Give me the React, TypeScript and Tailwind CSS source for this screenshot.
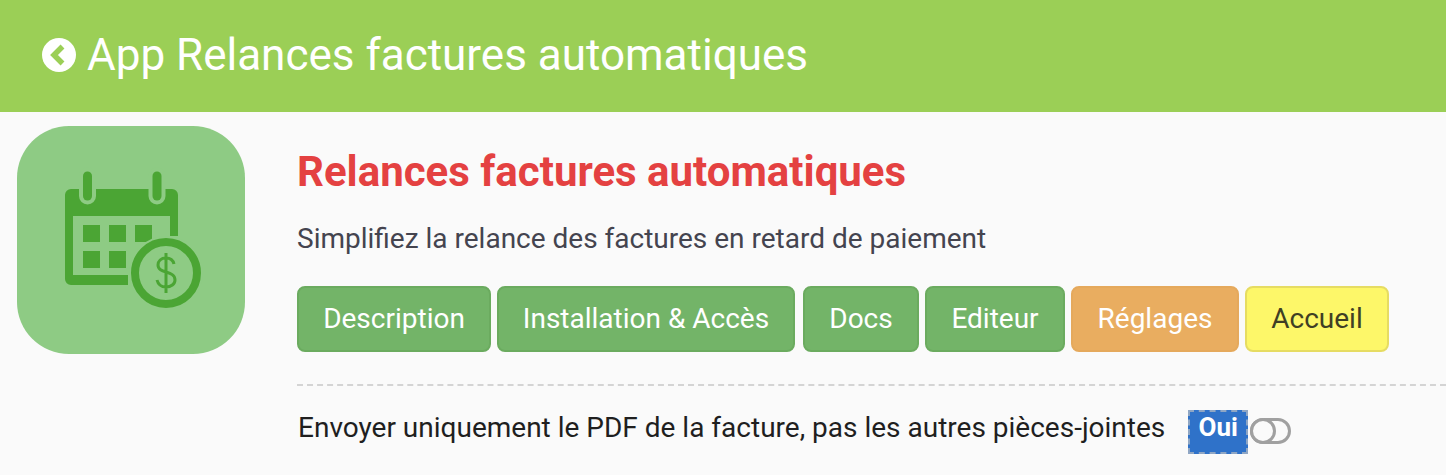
import { ReactNode } from "react";

function NavButton({ className, children }: { className: string; children: ReactNode }) {
  return (
    <a className={`flex h-[66px] items-center justify-center rounded-[8px] border-2 text-[28px] ${className}`}>
      {children}
    </a>
  );
}

function BackIcon() {
  return (
    <svg viewBox="0 0 34 34" className="h-[34px] w-[34px] shrink-0">
      <circle cx="17" cy="17" r="17" fill="#fff" />
      <path d="M20.5 8.5 12 17l8.5 8.5" fill="none" stroke="#9BCF56" strokeWidth="5.5" />
    </svg>
  );
}

function AppIcon() {
  return (
    <div className="h-[228px] w-[228px] shrink-0 rounded-[52px] bg-[#8ECB84]">
      <svg viewBox="0 0 228 228" className="h-[228px] w-[228px]">
        <path
          d="M54 63a6 6 0 0 0-6 6v84a6 6 0 0 0 6 6h57v-10H56V90h97v20h8V69a6 6 0 0 0-6-6z"
          fill="#4BA534"
        />
        <line x1="70.5" y1="50" x2="70.5" y2="70" stroke="#8ECB84" strokeWidth="17" strokeLinecap="round" />
        <line x1="140" y1="50" x2="140" y2="70" stroke="#8ECB84" strokeWidth="17" strokeLinecap="round" />
        <line x1="70.5" y1="50" x2="70.5" y2="70" stroke="#4BA534" strokeWidth="9" strokeLinecap="round" />
        <line x1="140" y1="50" x2="140" y2="70" stroke="#4BA534" strokeWidth="9" strokeLinecap="round" />
        <rect x="66" y="99" width="17" height="17" fill="#4BA534" />
        <rect x="92" y="99" width="17" height="17" fill="#4BA534" />
        <rect x="118" y="99" width="17" height="17" fill="#4BA534" />
        <rect x="66" y="125" width="17" height="17" fill="#4BA534" />
        <rect x="92" y="125" width="17" height="17" fill="#4BA534" />
        <circle cx="149" cy="147" r="37" fill="#8ECB84" />
        <circle cx="149" cy="147" r="31" fill="#8ECB84" stroke="#4BA534" strokeWidth="8" />
        <path
          d="M157 138c-1-4-4-6-8-6-5 0-8 3-8 7 0 9 17 5 17 15 0 4-4 7-9 7-5 0-8-3-9-7M149 127v40"
          fill="none"
          stroke="#4BA534"
          strokeWidth="3"
        />
      </svg>
    </div>
  );
}

export default function App() {
  return (
    <div className="h-[475px] w-[1446px] overflow-hidden bg-[#FAFAFA] font-['Roboto',sans-serif]">
      <header className="flex h-[112px] items-center gap-[12px] bg-[#9BCF56] pb-[2px] pl-[42px] text-[44px] text-white">
        <BackIcon />
        <h1 className="-ml-px">App Relances factures automatiques</h1>
      </header>

      <main className="flex items-start pl-[17px] pt-[14px]">
        <AppIcon />
        <div className="ml-[52px] w-[1149px]">
          <h2 className="mt-[20px] text-[42px] leading-[52px] font-bold text-[#E44141]">
            Relances factures automatiques
          </h2>
          <p className="mt-[23px] text-[28px] leading-[36px] text-[#44444F]">
            Simplifiez la relance des factures en retard de paiement
          </p>
          <nav className="mt-[29px] flex gap-[6px]">
            <NavButton className="w-[194px] border-[#6BAB5F] bg-[#73B468] text-white">Description</NavButton>
            <NavButton className="w-[298px] border-[#6BAB5F] bg-[#73B468] text-white">Installation &amp; Accès</NavButton>
            <NavButton className="ml-[2px] w-[116px] border-[#6BAB5F] bg-[#73B468] text-white">Docs</NavButton>
            <NavButton className="w-[140px] border-[#6BAB5F] bg-[#73B468] text-white">Editeur</NavButton>
            <NavButton className="w-[168px] border-[#E5A95C] bg-[#E9AD60] text-white">Réglages</NavButton>
            <NavButton className="w-[144px] border-[#E6DC62] bg-[#FDF769] text-[#403F24]">Accueil</NavButton>
          </nav>
          <div className="mt-[32px] border-t-2 border-dashed border-[#D4D4D4] pt-[24px]">
            <div className="flex items-start">
              <span className="ml-px text-[28px] leading-[36px] text-[#1F1F1F]">
                Envoyer uniquement le PDF de la facture, pas les autres pièces-jointes
              </span>
              <span className="ml-[23px] flex h-[44px] w-[60px] items-start justify-center border-2 border-dashed border-[#8FA6C4] bg-[#2F72C9] text-[26px] leading-[30px] font-bold text-white">
                Oui
              </span>
              <span className="relative ml-[2px] mt-[8px] h-[26px] w-[41px] rounded-full border-[3px] border-[#A0A0A0]">
                <span className="absolute left-[-3px] top-[-3px] h-[26px] w-[26px] rounded-full border-[3px] border-[#A0A0A0] bg-[#FAFAFA]" />
              </span>
            </div>
          </div>
        </div>
      </main>
    </div>
  );
}
